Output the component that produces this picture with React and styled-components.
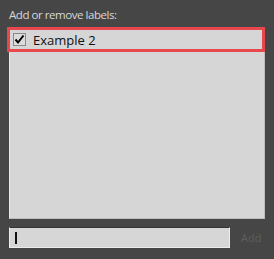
import React from 'react'
import styled, { createGlobalStyle } from 'styled-components'

const Global = createGlobalStyle`
  html, body {
    margin: 0;
    padding: 0;
    background: #464646;
  }
  body {
    font-family: "Open Sans", "Noto Sans", sans-serif;
  }
`

const Panel = styled.div`
  width: 274px;
  height: 259px;
  box-sizing: border-box;
  padding: 7px 8px 0 9px;
  display: flex;
  flex-direction: column;
`

const Caption = styled.div`
  font-size: 11.5px;
  letter-spacing: -0.45px;
  line-height: 16px;
  color: #d8d8d8;
  height: 20px;
`

const List = styled.div`
  width: 256px;
  height: 192px;
  box-sizing: border-box;
  background: #d6d6d6;
  border-left: 1px solid #e6e6e6;
  border-right: 1px solid #bcbcbc;
  border-bottom: 1px solid #bcbcbc;
  display: flex;
  flex-direction: column;
`

const Row = styled.div`
  margin: 0 -1px 0 -3px;
  height: 25px;
  box-sizing: border-box;
  border: 3px solid ${p => (p.selected ? '#e6484b' : 'transparent')};
  display: flex;
  align-items: center;
  gap: 7px;
  padding-left: 3px;
  font-size: 13px;
  color: #111;
`

const Check = styled.span`
  width: 13px;
  height: 13px;
  box-sizing: border-box;
  border: 1px solid #8a8a8a;
  background: #dcdcdc;
  display: flex;
  align-items: center;
  justify-content: center;
`

const Bottom = styled.div`
  margin-top: 8px;
  display: flex;
  align-items: center;
`

const Input = styled.div`
  width: 221px;
  height: 21px;
  box-sizing: border-box;
  background: #d6d6d6;
  border-top: 1px solid #333;
  border-left: 1px solid #ececec;
  border-right: 1px solid #ececec;
  border-bottom: 1px solid #ececec;
  display: flex;
  align-items: center;
  padding-left: 5px;
`

const Caret = styled.span`
  width: 2px;
  height: 12px;
  background: #111;
`

const AddButton = styled.span`
  margin-left: 11px;
  font-size: 11px;
  color: #5e5e5e;
`

export default function App() {
  return (
    <>
      <Global />
      <Panel>
        <Caption>Add or remove labels:</Caption>
        <List>
          <Row selected>
            <Check>
              <svg width="11" height="11" viewBox="0 0 11 11">
                <path d="M1.5 5.5 L4 8.5 L9.5 1.5" fill="none" stroke="#000" strokeWidth="2" />
              </svg>
            </Check>
            <span>Example 2</span>
          </Row>
        </List>
        <Bottom>
          <Input>
            <Caret />
          </Input>
          <AddButton>Add</AddButton>
        </Bottom>
      </Panel>
    </>
  )
}
